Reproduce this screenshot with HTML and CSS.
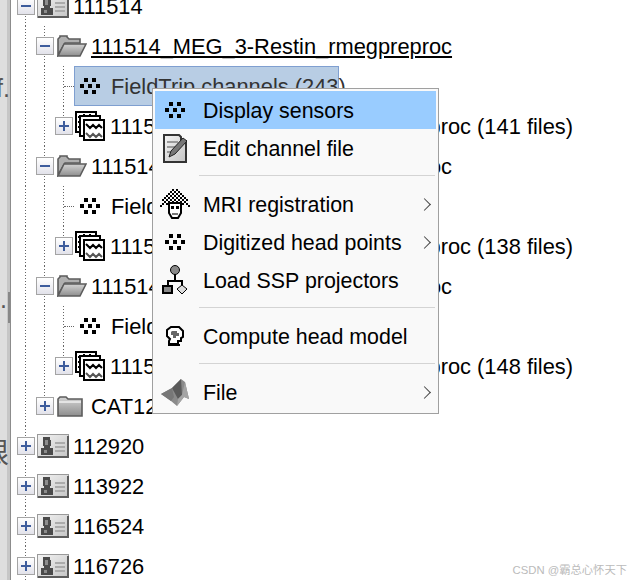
FILE: index.html
```html
<!DOCTYPE html>
<html lang="en">
<head>
    <meta charset="UTF-8">
    <title>Protocol tree</title>
    <link rel="stylesheet" href="styles.css">
</head>
<body>
<svg class="defs" width="0" height="0">
    <defs>
        <linearGradient id="card" x1="0" y1="0" x2="1" y2="1">
            <stop offset="0" stop-color="#f4f4f4"/>
            <stop offset="1" stop-color="#c4c4c4"/>
        </linearGradient>
        <linearGradient id="fold" x1="0" y1="0" x2="0" y2="1">
            <stop offset="0" stop-color="#d4d4d4"/>
            <stop offset="1" stop-color="#8e8e8e"/>
        </linearGradient>
        <pattern id="hair" width="4" height="4" patternUnits="userSpaceOnUse">
            <path d="M0 0h2v2H0zM2 2h2v2H2z" fill="#000"/>
        </pattern>
    </defs>
    <symbol id="dots" viewBox="0 0 20 16">
        <path d="M4 0h4v4H4zM12 0h4v4h-4zM0 6h4v4H0zM8 6h4v4H8zM16 6h4v4h-4zM4 12h4v4H4zM12 12h4v4h-4z" fill="#000"/>
    </symbol>
    <symbol id="subject" viewBox="0 0 32 24">
        <rect x="0.5" y="0.5" width="31" height="23" fill="url(#card)" stroke="#9a9a9a"/>
        <path d="M1 22h31v2H1zM30 2h2v22h-2z" fill="#5c5c5c"/>
        <path d="M6 3h7v3h1v6h-1v2h3v7H4v-7h3v-2H6z" fill="#4a4a4a"/>
        <path d="M8 6h3v5H8zM7 16h3v3H7z" fill="#8c8c8c"/>
        <path d="M18 8h10v2H18zM18 12h10v2H18zM18 16h10v2H18z" fill="#ababab"/>
    </symbol>
    <symbol id="folder-open" viewBox="0 0 30 22">
        <path d="M1 20V4l2-2V1h7v1l2 2h11v4H8L1 20z" fill="#b0b0b0" stroke="#5c5c5c" stroke-width="1.6"/>
        <path d="M1 21l6-12h22l-6 12z" fill="url(#fold)" stroke="#5c5c5c" stroke-width="1.6"/>
    </symbol>
    <symbol id="folder" viewBox="0 0 26 22">
        <path d="M1 4l2-2h6l2 2h14v17H1z" fill="url(#fold)" stroke="#5c5c5c" stroke-width="1.6"/>
        <path d="M2 6h22v2H2z" fill="#e4e4e4"/>
    </symbol>
    <symbol id="stack" viewBox="0 0 30 30">
        <rect x="1" y="1" width="20" height="20" fill="#fff" stroke="#000" stroke-width="2"/>
        <rect x="5" y="5" width="20" height="20" fill="#fff" stroke="#000" stroke-width="2"/>
        <rect x="9" y="9" width="20" height="20" fill="#fff" stroke="#000" stroke-width="2"/>
        <path d="M11 13l4 4 3-3 3 3 3-3 3 3" fill="none" stroke="#000" stroke-width="2"/>
        <path d="M11 22l4 4 3-3 3 3 3-3 3 3" fill="none" stroke="#555" stroke-width="2"/>
        <path d="M3 5h2v2H3zM3 10h2v2H3zM3 15h2v2H3zM8 3h2v2H8zM14 3h2v2h-2z" fill="#000"/>
    </symbol>
    <symbol id="edit" viewBox="0 0 24 29">
        <path d="M1 1h15l2 2v4l5 0v21H1z" fill="url(#card)" stroke="#333" stroke-width="2"/>
        <path d="M4 7h11v2H4zM4 12h9v2H4zM4 17h6v2H4z" fill="#9a9a9a"/>
        <path d="M6 23l2-6L20 4l4 3-12 13z" fill="#777" stroke="#222"/>
    </symbol>
    <symbol id="mri" viewBox="0 0 30 31">
        <path d="M12 0h6v2h4v2h2v2h2v4h2v4h2v4h-4v-2H4v2H0v-4h2v-4h2V6h2V4h2V2h4z" fill="url(#hair)"/>
        <path d="M9 14h12v10l-3 5h-6l-3-5z" fill="#fff" stroke="#000" stroke-width="2"/>
        <path d="M11 17h3v3h-3zM16 17h3v3h-3z" fill="#000"/>
        <path d="M12 24h6v2h-6z" fill="#777"/>
    </symbol>
    <symbol id="ssp" viewBox="0 0 26 30">
        <circle cx="13" cy="5" r="4.5" fill="#888" stroke="#000"/>
        <path d="M12 9h2v7h-2zM5 15h16v2H5zM5 15h2v6H5zM19 15h2v5h-2z" fill="#000"/>
        <path d="M1 21h9v7H1z" fill="#888" stroke="#000" stroke-width="2"/>
        <path d="M20 20l5 4-5 5-5-5z" fill="#ddd" stroke="#000"/>
    </symbol>
    <symbol id="head" viewBox="0 0 18 20">
        <path d="M5 1h8l4 4v6l-2 1v3h-3v3H3v-3l1-2-3-3V4z" fill="#fff" stroke="#000" stroke-width="2"/>
        <path d="M6 5h5v2h2v3h-3v2H7V9H5V6z" fill="#666"/>
        <path d="M2 18h12v2H2z" fill="#000"/>
    </symbol>
    <symbol id="matlab" viewBox="0 0 28 27">
        <path d="M0 15l11-6 9-9 4 3 4 17-5-2-7 9-6-5z" fill="#8a8a8a"/>
        <path d="M11 9l9-9 1 16-4 4z" fill="#5a5a5a"/>
        <path d="M21 16l3-13 4 17-5-2-7 9 1-7z" fill="#a4a4a4"/>
        <path d="M0 15l11-6 2 9-3 4z" fill="#777"/>
    </symbol>
</svg>

<div class="strip">
    <span class="strip-text strip-f">f.</span>
    <span class="strip-text strip-dot">.</span>
    <span class="strip-text strip-cjk">限</span>
    <span class="grip"></span>
</div>

<div class="tree">
    <div class="row lvl0 g0">
        <span class="box minus"></span>
        <svg class="ico subject"><use href="#subject"/></svg>
        <span class="label">111514</span>
    </div>
    <div class="row lvl1 g0 g1">
        <span class="box minus"></span>
        <svg class="ico folder-open"><use href="#folder-open"/></svg>
        <span class="label underlined">111514_MEG_3-Restin_rmegpreproc</span>
    </div>
    <div class="row leaf g0 g1 g2">
        <span class="hline"></span>
        <div class="selected">
            <svg class="ico dots"><use href="#dots"/></svg>
            <span class="label muted">FieldTrip channels (243)</span>
        </div>
    </div>
    <div class="row lvl2 g0 g1 g2-end">
        <span class="box plus"></span>
        <svg class="ico stack"><use href="#stack"/></svg>
        <span class="label">111514_MEG_3-Restin_rmegpreproc (141 files)</span>
    </div>
    <div class="row lvl1 g0 g1">
        <span class="box minus"></span>
        <svg class="ico folder-open"><use href="#folder-open"/></svg>
        <span class="label">111514_MEG_3-Restin_rmegpreproc</span>
    </div>
    <div class="row leaf g0 g1 g2">
        <span class="hline"></span>
        <svg class="ico dots"><use href="#dots"/></svg>
        <span class="label">FieldTrip channels (243)</span>
    </div>
    <div class="row lvl2 g0 g1 g2-end">
        <span class="box plus"></span>
        <svg class="ico stack"><use href="#stack"/></svg>
        <span class="label">111514_MEG_3-Restin_rmegpreproc (138 files)</span>
    </div>
    <div class="row lvl1 g0 g1">
        <span class="box minus"></span>
        <svg class="ico folder-open"><use href="#folder-open"/></svg>
        <span class="label">111514_MEG_3-Restin_rmegpreproc</span>
    </div>
    <div class="row leaf g0 g1 g2">
        <span class="hline"></span>
        <svg class="ico dots"><use href="#dots"/></svg>
        <span class="label">FieldTrip channels (243)</span>
    </div>
    <div class="row lvl2 g0 g1 g2-end">
        <span class="box plus"></span>
        <svg class="ico stack"><use href="#stack"/></svg>
        <span class="label">111514_MEG_3-Restin_rmegpreproc (148 files)</span>
    </div>
    <div class="row lvl1 g0 g1-end">
        <span class="box plus"></span>
        <svg class="ico folder"><use href="#folder"/></svg>
        <span class="label">CAT12</span>
    </div>
    <div class="row lvl0 g0">
        <span class="box plus"></span>
        <svg class="ico subject"><use href="#subject"/></svg>
        <span class="label">112920</span>
    </div>
    <div class="row lvl0 g0">
        <span class="box plus"></span>
        <svg class="ico subject"><use href="#subject"/></svg>
        <span class="label">113922</span>
    </div>
    <div class="row lvl0 g0">
        <span class="box plus"></span>
        <svg class="ico subject"><use href="#subject"/></svg>
        <span class="label">116524</span>
    </div>
    <div class="row lvl0 g0">
        <span class="box plus"></span>
        <svg class="ico subject"><use href="#subject"/></svg>
        <span class="label">116726</span>
    </div>
</div>

<div class="menu">
    <div class="item active">
        <span class="item-ico"><svg class="m-dots"><use href="#dots"/></svg></span>
        <span class="item-text">Display sensors</span>
    </div>
    <div class="item">
        <span class="item-ico"><svg class="m-edit"><use href="#edit"/></svg></span>
        <span class="item-text">Edit channel file</span>
    </div>
    <div class="sep"></div>
    <div class="item">
        <span class="item-ico"><svg class="m-mri"><use href="#mri"/></svg></span>
        <span class="item-text">MRI registration</span>
        <span class="arrow"></span>
    </div>
    <div class="item">
        <span class="item-ico"><svg class="m-dots"><use href="#dots"/></svg></span>
        <span class="item-text">Digitized head points</span>
        <span class="arrow"></span>
    </div>
    <div class="item">
        <span class="item-ico"><svg class="m-ssp"><use href="#ssp"/></svg></span>
        <span class="item-text">Load SSP projectors</span>
    </div>
    <div class="sep"></div>
    <div class="item">
        <span class="item-ico"><svg class="m-head"><use href="#head"/></svg></span>
        <span class="item-text">Compute head model</span>
    </div>
    <div class="sep"></div>
    <div class="item">
        <span class="item-ico"><svg class="m-matlab"><use href="#matlab"/></svg></span>
        <span class="item-text">File</span>
        <span class="arrow"></span>
    </div>
</div>

<div class="watermark">CSDN @霸总心怀天下</div>
</body>
</html>
```

FILE: styles.css
```css
html, body {
    margin: 0;
    padding: 0;
    height: 580px;
    overflow: hidden;
    background-color: #ffffff;
    font-family: "Liberation Sans", Arial, sans-serif;
    color: #000;
}

.defs {
    position: absolute;
}

/* grey panel edge on the left */
.strip {
    position: absolute;
    left: 0;
    top: 0;
    width: 10px;
    height: 580px;
    background: linear-gradient(to right, #dedede 7px, #c6c6c6 7px);
    overflow: hidden;
}

.strip-text {
    position: absolute;
    left: -4px;
    color: #555;
    font-size: 25px;
}

.strip-f {
    top: 74px;
}

.strip-dot {
    top: 285px;
    left: 0;
}

.strip-cjk {
    top: 431px;
    left: -19px;
    font-size: 28px;
    font-family: "Noto Sans CJK SC", sans-serif;
}

.grip {
    position: absolute;
    left: 8px;
    top: 292px;
    width: 2px;
    height: 31px;
    background-color: #888;
}

/* tree */
.tree {
    position: absolute;
    left: 10px;
    right: 0;
    top: -14px;
    border-left: 1px solid #8c8c8c;
    font-size: 21.85px;
}

.row {
    --dots: repeating-linear-gradient(#666 0 1px, transparent 1px 3px);
    display: flex;
    align-items: center;
    height: 40px;
    white-space: nowrap;
    position: relative;
    background-image: var(--dots), var(--dots), var(--dots);
    background-position: 14px 0, 33px 0, 52px 0;
    background-repeat: no-repeat;
    background-size: var(--s0, 0 0), var(--s1, 0 0), var(--s2, 0 0);
}

.g0 {
    --s0: 1px 100%;
}

.g1 {
    --s1: 1px 100%;
}

.g1-end {
    --s1: 1px 11px;
}

.g2 {
    --s2: 1px 100%;
}

.g2-end {
    --s2: 1px 11px;
}

.lvl0 {
    padding-left: 6px;
}

.lvl1 {
    padding-left: 25px;
}

.lvl2 {
    padding-left: 44px;
}

.leaf {
    padding-left: 63px;
}

.label {
    padding-top: 2px;
}

.box {
    position: relative;
    box-sizing: border-box;
    width: 18px;
    height: 18px;
    border: 1px solid #a4a4a4;
    background: linear-gradient(#ffffff, #e2e2ea);
    flex-shrink: 0;
}

.minus::before,
.plus::before,
.plus::after {
    content: "";
    position: absolute;
    background-color: #3d5c9c;
}

.minus::before,
.plus::before {
    left: 3px;
    top: 7px;
    width: 10px;
    height: 2px;
}

.plus::after {
    left: 7px;
    top: 3px;
    width: 2px;
    height: 10px;
}

.ico {
    display: block;
    flex-shrink: 0;
}

.subject {
    width: 32px;
    height: 24px;
    margin-left: 2px;
    margin-right: 4px;
}

.folder-open {
    width: 30px;
    height: 22px;
    margin-left: 3px;
    margin-right: 4px;
}

.folder {
    width: 26px;
    height: 22px;
    margin-left: 3px;
    margin-right: 8px;
}

.stack {
    width: 30px;
    height: 30px;
    margin-left: 2px;
    margin-right: 5px;
}

.dots {
    width: 20px;
    height: 16px;
    margin-left: 6px;
    margin-right: 11px;
}

.hline {
    position: absolute;
    left: 53px;
    top: 20px;
    width: 10px;
    border-top: 1px dotted #666;
}

.selected {
    display: flex;
    align-items: center;
    box-sizing: border-box;
    width: 265px;
    height: 40px;
    background-color: #b8cde4;
    border: 1px solid #7f9fd0;
}

.selected .dots {
    margin-left: 5px;
}

.muted {
    color: #333;
}

.underlined {
    text-decoration: underline;
    text-underline-offset: 2px;
}

/* context menu */
.menu {
    position: absolute;
    left: 152px;
    top: 88px;
    width: 281px;
    height: 320px;
    padding: 2px;
    border: 1px solid #a0a0a0;
    background-color: #f9f9f9;
    font-size: 21.4px;
}

.item {
    display: flex;
    align-items: center;
    height: 38px;
    position: relative;
}

.item-text {
    padding-top: 2px;
}

.active {
    background-color: #99ccff;
}

.item-ico {
    display: flex;
    align-items: center;
    justify-content: center;
    width: 40px;
    height: 38px;
    margin-right: 8px;
}

.m-dots {
    width: 20px;
    height: 16px;
}

.m-edit {
    width: 24px;
    height: 29px;
}

.m-mri {
    width: 30px;
    height: 31px;
}

.m-ssp {
    width: 26px;
    height: 30px;
}

.m-head {
    width: 18px;
    height: 20px;
}

.m-matlab {
    width: 28px;
    height: 27px;
}

.sep {
    height: 1px;
    margin: 8px 1px 9px 44px;
    background-color: #d4d4d4;
}

.arrow {
    position: absolute;
    right: 7px;
    top: 15px;
    width: 8px;
    height: 8px;
    border-top: 1.5px solid #444;
    border-right: 1.5px solid #444;
    transform: rotate(45deg);
}

.watermark {
    position: absolute;
    right: 6px;
    top: 561px;
    font-size: 11.3px;
    color: #bbb;
    font-family: "Liberation Sans", "Noto Sans CJK SC", sans-serif;
}
```
